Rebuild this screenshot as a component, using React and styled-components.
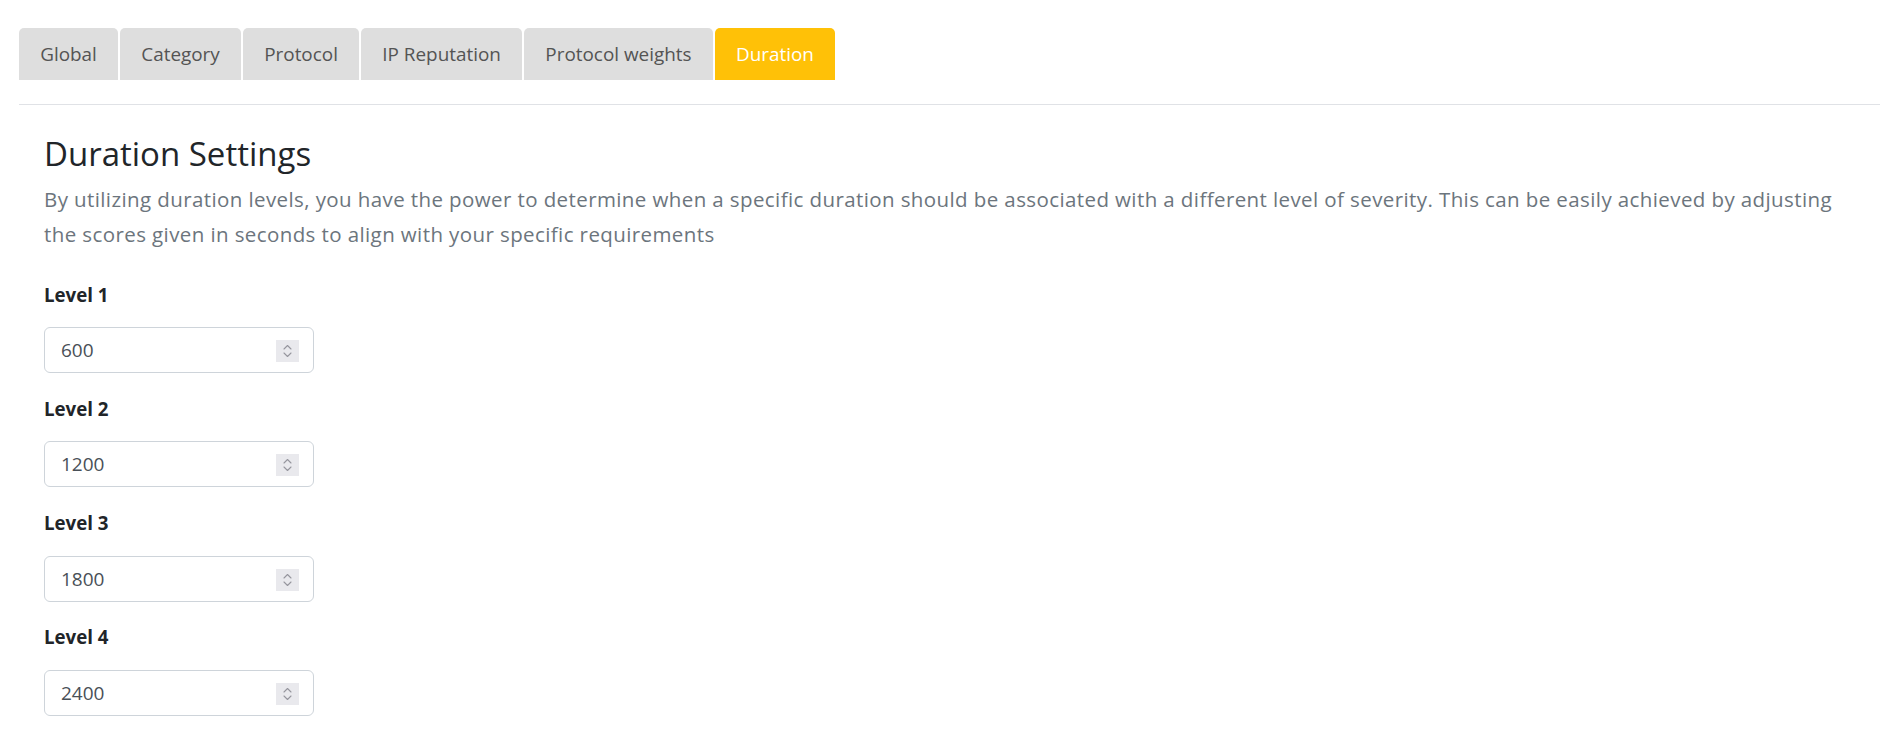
import React from "react";
import styled, { createGlobalStyle } from "styled-components";

const Global = createGlobalStyle`
  html, body { margin: 0; padding: 0; background: #ffffff; }
  body { font-family: "Open Sans", "Noto Sans", sans-serif; color: #212529; }
  * { box-sizing: border-box; }
`;

const Page = styled.div`
  padding: 28px 18px 0 19px;
`;

const TabBar = styled.nav`
  display: flex;
  gap: 2px;
`;

const Tab = styled.button`
  height: 52px;
  padding: 0 21.2px;
  border: none;
  border-radius: 5px 5px 0 0;
  font-family: inherit;
  font-size: 18.9px;
  background: ${(p) => (p.$active ? "#ffc107" : "#dedede")};
  color: ${(p) => (p.$active ? "#ffffff" : "#545454")};
  display: flex;
  align-items: center;
  cursor: pointer;
`;

const Divider = styled.hr`
  margin: 24px 0 0;
  border: none;
  border-top: 1px solid #e0e2e6;
`;

const Content = styled.section`
  padding: 29px 25px 0 25px;
`;

const Heading = styled.h3`
  margin: 0;
  font-size: 33px;
  font-weight: 400;
  line-height: 39px;
  color: #212529;
`;

const Lead = styled.p`
  margin: 9px 0 0;
  max-width: 1812px;
  font-size: 20.5px;
  letter-spacing: 0.4px;
  line-height: 35px;
  color: #6c757d;
`;

const Fields = styled.div`
  margin-top: 28.5px;
  display: flex;
  flex-direction: column;
  gap: 21.8px;
`;

const Field = styled.div`
  display: flex;
  flex-direction: column;
  gap: 19.5px;
`;

const Label = styled.label`
  font-size: 18.7px;
  line-height: 27px;
  font-weight: 700;
  color: #212529;
`;

const InputWrap = styled.div`
  position: relative;
  width: 270px;
  height: 46px;
`;

const NumberInput = styled.input`
  width: 100%;
  height: 100%;
  padding: 0 48px 0 16px;
  border: 1px solid #ced4da;
  border-radius: 6px;
  font-family: inherit;
  font-size: 19px;
  color: #495057;
  background: #fff;
  outline: none;
  -moz-appearance: textfield;
  &::-webkit-outer-spin-button,
  &::-webkit-inner-spin-button {
    -webkit-appearance: none;
    margin: 0;
  }
`;

const Spinner = styled.span`
  position: absolute;
  right: 15px;
  top: 13px;
  width: 23px;
  height: 22px;
  background: #e9e9ed;
  display: flex;
  align-items: center;
  justify-content: center;
`;

const SpinIcon = () => (
  <svg width="11" height="16" viewBox="0 0 11 16" fill="none">
    <path d="M2 6 L5.5 2.5 L9 6" stroke="#96969e" strokeWidth="1.1" strokeLinecap="round" strokeLinejoin="round" />
    <path d="M2 10 L5.5 13.5 L9 10" stroke="#96969e" strokeWidth="1.1" strokeLinecap="round" strokeLinejoin="round" />
  </svg>
);

const tabs = ["Global", "Category", "Protocol", "IP Reputation", "Protocol weights", "Duration"];
const levels = [
  { label: "Level 1", value: 600 },
  { label: "Level 2", value: 1200 },
  { label: "Level 3", value: 1800 },
  { label: "Level 4", value: 2400 },
];

export default function App() {
  return (
    <>
      <Global />
      <Page>
        <TabBar>
          {tabs.map((t) => (
            <Tab key={t} $active={t === "Duration"}>
              {t}
            </Tab>
          ))}
        </TabBar>
        <Divider />
        <Content>
          <Heading>Duration Settings</Heading>
          <Lead>
            By utilizing duration levels, you have the power to determine when a specific duration should be
            associated with a different level of severity. This can be easily achieved by adjusting the scores given
            in seconds to align with your specific requirements
          </Lead>
          <Fields>
            {levels.map((l, i) => (
              <Field key={l.label}>
                <Label htmlFor={`level-${i}`}>{l.label}</Label>
                <InputWrap>
                  <NumberInput id={`level-${i}`} type="number" defaultValue={l.value} />
                  <Spinner>
                    <SpinIcon />
                  </Spinner>
                </InputWrap>
              </Field>
            ))}
          </Fields>
        </Content>
      </Page>
    </>
  );
}
